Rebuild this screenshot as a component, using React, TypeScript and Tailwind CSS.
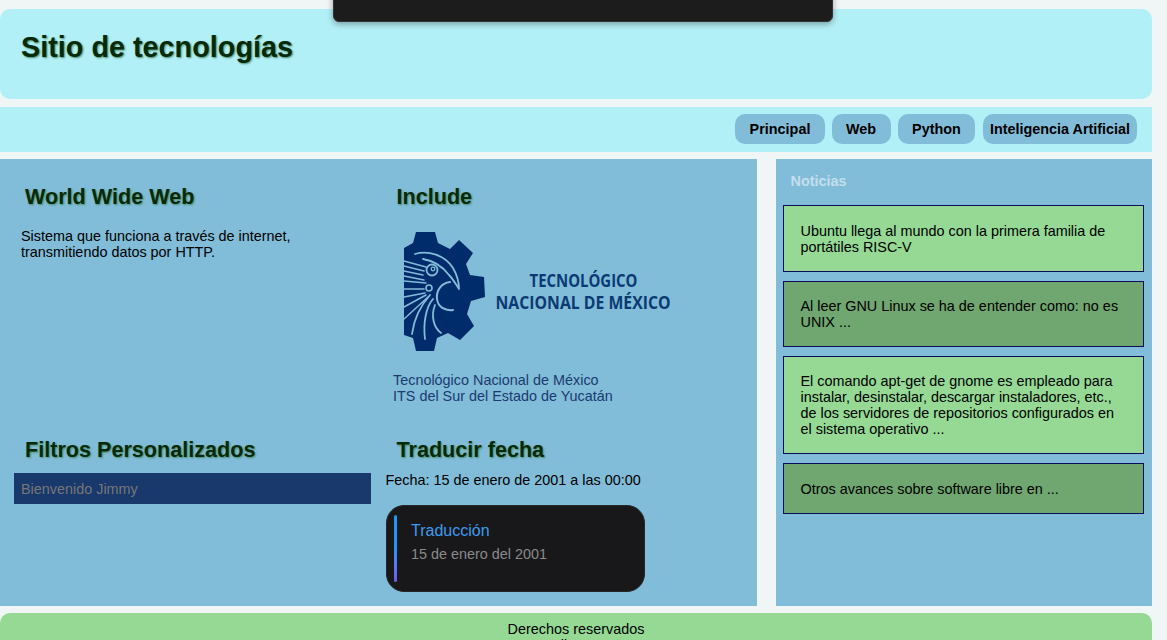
import React from 'react';

const sans = { fontFamily: '"Liberation Sans", Arial, sans-serif' };

const navLinks = [
  { label: 'Principal', cls: 'w-[90px]' },
  { label: 'Web', cls: 'w-[59px] pr-px' },
  { label: 'Python', cls: 'w-[77px]' },
  { label: 'Inteligencia Artificial', cls: 'w-[154px] ml-px' },
];

const noticias = [
  { text: 'Ubuntu llega al mundo con la primera familia de portátiles RISC-V', dark: false },
  { text: 'Al leer GNU Linux se ha de entender como: no es UNIX ...', dark: true },
  {
    text: 'El comando apt-get de gnome es empleado para instalar, desinstalar, descargar instaladores, etc., de los servidores de repositorios configurados en el sistema operativo ...',
    dark: false,
  },
  { text: 'Otros avances sobre software libre en ...', dark: true },
];

// titulos verdes con sombra, se repiten en las cuatro secciones
const SectionTitle = ({ children, className }: { children: React.ReactNode; className: string }) => (
  <h2
    className={`text-[21.6px] leading-[25px] font-bold text-[#072b0a] [text-shadow:1px_1px_2px_#4a8a6a] ${className}`}
  >
    {children}
  </h2>
);

const TecnmLogo = () => (
  <svg width="282" height="122" viewBox="0 0 282 122" className="block">
    <path
      fill="#002c6b"
      d="M11 17 L20 12 L23 1 L42 1 L45 12 L57 18 L66 9 L80 22 L73 33 L77 44 L91 46 L92 66 L78 70 L74 83 L81 95 L67 109 L55 102 L44 107 L41 120 L23 120 L20 107 L11 104 Z"
    />
    <g fill="none" stroke="#81bdd9" strokeLinecap="round" strokeLinejoin="round">
      <path strokeWidth="1.8" d="M22 23 C35 19 52 24 60 37 C64 44 66 50 66 58 C62 52 60 48 56 44 C50 36 42 30 30 28" />
      <path strokeWidth="1.5" d="M11 30 L33 36 M11 35 L31 40 M11 40 L30 44 M11 45 L31 49 M11 50 L33 52" />
      <circle cx="39" cy="39" r="5.5" strokeWidth="1.8" />
      <circle cx="40" cy="38" r="1.8" strokeWidth="1.3" />
      <circle cx="36" cy="57" r="3" strokeWidth="1.6" />
      <path strokeWidth="2" d="M57 51 C48 52 43 60 44 68 C45 76 52 80 60 79" />
      <path strokeWidth="1.5" d="M11 58 L31 58 M11 66 L32 62 M11 76 L33 64 M11 88 L35 66" />
      <path strokeWidth="1.8" d="M19 103 C21 88 28 74 37 64 M32 108 C30 92 33 76 40 68 M48 102 C40 96 38 84 42 74" />
    </g>
    <text
      x="190.5"
      y="56"
      textAnchor="middle"
      textLength="108"
      lengthAdjust="spacingAndGlyphs"
      fill="#0b3a73"
      fontFamily="'Open Sans', sans-serif"
      fontSize="18"
      fontWeight="700"
    >
      TECNOLÓGICO
    </text>
    <text
      x="190"
      y="78"
      textAnchor="middle"
      textLength="175"
      lengthAdjust="spacingAndGlyphs"
      fill="#0b3a73"
      fontFamily="'Open Sans', sans-serif"
      fontSize="18"
      fontWeight="700"
    >
      NACIONAL DE MÉXICO
    </text>
  </svg>
);

export default function App() {
  return (
    <div className="relative h-[640px] overflow-hidden bg-[#f0f5f5] pr-[15px] pt-[9px] text-[14.4px] text-black" style={sans}>
      <div className="absolute left-[333px] top-[-10px] z-10 h-[32px] w-[500px] rounded-md border border-[#333] bg-[#1c1c1c] shadow-[0_2px_6px_rgba(0,0,0,0.35)]" />

      <header className="h-[90px] rounded-[10px] bg-[#b2f0f7] pl-[21px] pt-[20px]">
        <h1 className="text-[28.8px] leading-[36px] font-bold text-[#072b0a] [text-shadow:1px_1px_2px_#4a8a6a]">
          Sitio de tecnologías
        </h1>
      </header>

      <nav className="mt-2 flex h-[45px] items-center justify-end gap-[7px] bg-[#b2f0f7] pr-[15px] pb-[1px]">
        {navLinks.map((link) => (
          <a
            key={link.label}
            href="#"
            className={`flex h-[30px] items-center justify-center rounded-[10px] bg-[#81bdd9] pt-px font-bold whitespace-nowrap ${link.cls}`}
          >
            {link.label}
          </a>
        ))}
      </nav>

      <div className="mt-[7px] flex h-[447px] justify-between">
        <main className="grid w-[757px] grid-cols-[372px_1fr] grid-rows-[252px_1fr] bg-[#81bdd9]">
          <section className="pl-[21px] pt-[25px]">
            <SectionTitle className="pl-1">World Wide Web</SectionTitle>
            <p className="mt-[19px] w-[300px] leading-4">
              Sistema que funciona a través de internet, transmitiendo datos por HTTP.
            </p>
          </section>

          <section className="pl-[21px] pt-[25px]">
            <SectionTitle className="pl-[3.5px]">Include</SectionTitle>
            <div className="mt-[22px]">
              <TecnmLogo />
            </div>
            <p className="mt-[19px] leading-4 text-[#1c3a6e]">
              Tecnológico Nacional de México
              <br />
              ITS del Sur del Estado de Yucatán
            </p>
          </section>

          <section className="pl-[14px] pt-[26px]">
            <SectionTitle className="pl-[11px]">Filtros Personalizados</SectionTitle>
            <div className="mt-[11px] flex h-[31px] w-[357px] items-center bg-[#19386b] pt-[2px] pl-[7px] text-[#777]">
              Bienvenido Jimmy
            </div>
          </section>

          <section className="pl-[14px] pt-[26px]">
            <SectionTitle className="pl-[10.5px]">Traducir fecha</SectionTitle>
            <p className="mt-[10px] -ml-[0.5px] leading-4">Fecha: 15 de enero de 2001 a las 00:00</p>
            <div className="mt-[17px] flex h-[87px] w-[259px] rounded-[18px] border border-[#27272a] bg-[#18181b] pt-[9px] pl-[7px]">
              <div className="h-[67px] w-[3px] rounded-sm bg-gradient-to-b from-[#2196f3] from-50% to-[#6d5ce7]" />
              <div className="ml-[14px]">
                <p className="mt-[6px] text-base leading-[19px] text-[#3b9cf0]">Traducción</p>
                <p className="mt-[5px] leading-[19px] text-[#8a8a8a]">15 de enero del 2001</p>
              </div>
            </div>
          </section>
        </main>

        <aside className="w-[376px] bg-[#81bdd9] pr-[8px] pl-[7px]">
          <h3 className="pt-[14px] pl-[7.5px] leading-4 font-bold text-[#c3dfec]">Noticias</h3>
          <div className="mt-[16.2px] flex flex-col gap-[9px]">
            {noticias.map((n) => (
              <article
                key={n.text}
                className={`border border-[#0a0a5a] pt-[16.5px] pr-[16px] pb-[15.9px] pl-[16.5px] leading-4 ${
                  n.dark ? 'bg-[#70a670]' : 'bg-[#95d995]'
                }`}
              >
                {n.text}
              </article>
            ))}
          </div>
        </aside>
      </div>

      <footer className="mt-[7px] h-[60px] rounded-[10px] bg-[#95d995] pt-2 text-center leading-4">
        Derechos reservados
        <br />
        llena
      </footer>
    </div>
  );
}
